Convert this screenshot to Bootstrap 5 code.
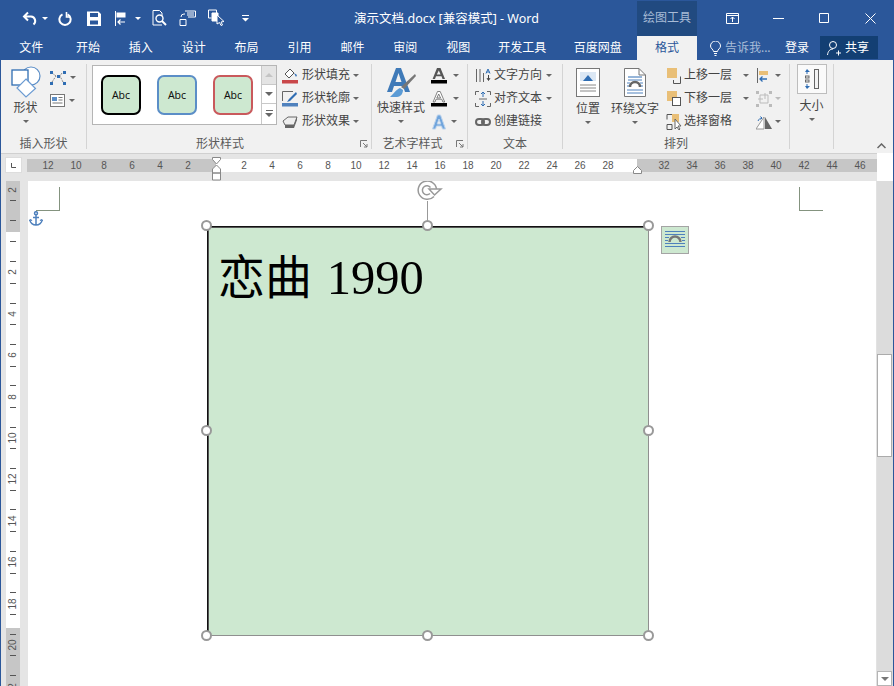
<!DOCTYPE html>
<html lang="zh-CN">
<head>
<meta charset="utf-8">
<title>演示文档.docx [兼容模式] - Word</title>
<link href="https://cdn.jsdelivr.net/npm/bootstrap@5.3.0/dist/css/bootstrap.min.css" rel="stylesheet">
<style>
html,body{margin:0;height:100%;overflow:hidden;background:#fff}
body{font-family:"Noto Sans","Noto Sans CJK SC",sans-serif;font-size:12px;line-height:1.2;color:#444}
svg{display:block;flex:none}
.ml1{margin-left:1px}.ml2{margin-left:2px}.ml3{margin-left:3px}.ml4{margin-left:4px}.ml6{margin-left:6px}.ml7{margin-left:7px}.ml9{margin-left:9px}.ml10{margin-left:10px}.ml11{margin-left:11px}.ml12{margin-left:12px}.ml14{margin-left:14px}.ml15{margin-left:15px}.ml17{margin-left:17px}
.wapp{width:894px;height:686px;border-left:1px solid #2b579a;border-right:1px solid #2b579a;overflow:hidden}
.wtitle{height:36px;background:#2b579a;color:#fff}
.wqat{width:304px;padding-left:21px;height:36px}
.wname{width:283px;font-size:12.5px;color:#fff;margin-right:49px}
.wtool{width:60px;height:35px;margin-top:1px;background:#214a80;color:#a8bbd6}
.wctl{width:46px;height:36px}
.wctl-first{margin-left:12px}
.wtri-w{border-top-color:#fff!important}
.wtabs{height:24px;background:#2b579a;color:#fff;line-height:24px}
.wtab{width:52.9px;text-align:center;white-space:nowrap}
.wtab-file{width:60.5px;text-align:center}
.wtab-w4{width:75.5px;text-align:center}
.wtab-on{width:60px;height:24px;text-align:center;background:#f1f1f1;color:#2b579a;margin-left:1.3px}
.wtell{width:82px;padding-left:13px;color:#a9bdd8;gap:4px}
.wlogin{width:36px;text-align:center}
.wshare{width:58px;height:23px;margin:0 15px 0 auto;background:#133f73;gap:4px;padding-left:7px}
.wribbon{height:93px;background:#f1f1f1;padding-top:4px;position:relative}
.wgrp{height:85px;border-right:1px solid #d4d4d4}
.wbody{height:73px}
.wlabel{height:13px;line-height:13px;text-align:center;color:#5a5a5a;position:relative}
.wl-style{padding-right:18px}
.wl-art{padding-right:14px}
.wlaunch{position:absolute;right:3px;top:3px}
.wg1{width:86px}.wg2{width:285px}.wg3{width:96px}.wg4{width:95px}.wg5{width:227px}.wg6{width:44px}
.wbig{text-align:center;white-space:nowrap}
.wbig svg{margin:0 auto}
.wbig-cap{margin-top:3px}
.wcap-quick{margin-top:2px}
.wcap-doc{margin-top:5px}
.wcap-size{margin-top:5px}
.wtri{width:0;height:0;border-left:3px solid transparent;border-right:3px solid transparent;border-top:3px solid #666;display:inline-block;flex:none}
.wtri-off{border-top-color:#bbb}
.wbig .wtri{display:block;margin:5px auto 0}
.wrow{height:23px;white-space:nowrap}
.wrow svg{width:16px;height:16px}
.wrow-s{height:23px;gap:4px}
.wcol-s{padding-top:2px}
.wgal{width:185px;height:60px;margin:1px 0 0 5px;background:#fff;border:1px solid #b5b5b5}
.wswatches{width:169px;padding-left:8px;gap:16px}
.wsw{width:40px;height:40px;background:#cde8d0;border:2px solid #000;border-radius:7px;color:#111;font-size:10.5px;font-family:"Noto Sans",sans-serif;text-align:center;line-height:36px;margin-top:9px}
.wsw-b{border-color:#5b8ec7}.wsw-r{border-color:#c9595c}
.wgscroll{width:15px;border-left:1px solid #c8c8c8}
.wgscroll>div{height:19px;border-bottom:1px solid #c8c8c8}
.wgscroll>div:last-child{border-bottom:0}
.wgup{background:#e4e4e4}
.wtu-off{border-bottom-color:#c4c4c4!important}
.wtd-d{border-top-color:#666!important}
.wbarline{width:7px;height:1px;background:#666;margin-bottom:2px}
.wsizebtn{width:30px;height:30px;background:#fafafa;border:1px solid #bdbdbd;margin:0 auto}
.wcmd{margin-left:5px}
.wc-shape{width:49px}.wc-quick{width:58px}.wc-pos{width:50px}.wc-wrap{width:48px;margin-left:-2px}
.wc-arr{margin-left:7px;width:90px}
.wi-shape{margin-top:2px!important;margin-left:10px!important}
.wi-big{margin-top:4px!important}
.wtxt-g{padding-left:7px}
.wrulerh{height:28px;background:#e5e5e5;border-top:1px solid #d0d0d0;padding-left:4px;width:876px}
.wcorner{width:17px;height:16px;background:#fff;border:1px solid #ddd;margin-top:3px;margin-right:5px}
.wrulerbar{height:13px;margin-top:5px;color:#555;font-size:10px;line-height:13px;font-family:"Liberation Sans",sans-serif}
.wrg{background:#c6c6c6}
.wrw{background:#fff}
.wnum{width:28px;text-align:center;flex:none}
.wrg1{width:189px;padding-left:7px}
.wrg2{width:421px;padding-left:14px}
.wrg3{width:240px;padding-left:13px}
.wmarg{position:absolute;left:211px;top:3px}
.wmarg2{position:absolute;left:632px;top:12px}
.wmain{height:505px;position:relative;overflow:hidden;width:892px}
.wrulerv{width:27px;background:#e5e5e5;padding-left:5px;flex:none}
.wvbar{width:14px;height:505px;overflow:hidden;background:linear-gradient(#c6c6c6 0 51px,#fff 51px 447px,#c6c6c6 447px)}
.wvcell{height:41.4px;display:grid;grid-template-rows:1fr 2fr 1fr;justify-items:center;font:10px/1 "Liberation Sans",sans-serif;color:#555}
.wvcell:first-child{margin-top:-12px}
.wvt{width:6px;height:1px;background:#555}
.wvt1{align-self:end}
.wvt2{align-self:start}
.wvn{align-self:center;transform:rotate(-90deg)}
.wdoc{flex:1 1 auto;background:#fff;position:relative;overflow:hidden}
.wcrops{padding:6px 53px 0 8px;height:30px}
.wcrop{width:24px;height:24px;border-color:#84937f;border-style:solid;border-width:0}
.wcrop-l{border-right-width:1px;border-bottom-width:1px}
.wcrop-r{border-left-width:1px;border-bottom-width:1px}
.wanchor{position:absolute;left:1px;top:30px}
.wshape{position:relative;width:442px;height:410px;margin:15px 0 0 179px;background:#cde8d0;border:1px solid #8f8f8f;border-left-color:#111;border-top-color:#111;box-shadow:inset 1px 1px 0 #555}
.wtext{font-family:"Liberation Serif","Noto Sans CJK SC",serif;font-size:47px;line-height:1;color:#000;padding:27px 0 0 10px;white-space:nowrap}
.wdig{font-size:48.5px;margin-left:3px}
.whd{position:absolute;width:11px;height:11px;border-radius:50%;background:#fff;border:2px solid #999}
.wh-t{top:-7px}.wh-m{top:198px}.wh-b{top:403px}
.wh-l{left:-7px}.wh-c{left:214px}.wh-r{left:435px}
.wstem{position:absolute;left:219px;top:-26px;width:1px;height:26px;background:#999}
.wrot{position:absolute;left:209px;top:-46px}
.wwrap{position:absolute;left:453px;top:-1px;width:28px;height:28px;background:#cde8d0;border:1px solid #a4a4a4;padding:3px}
.wscroll{width:17px;background:#dcdcdc;flex:none;margin-top:-28px;height:533px;border-left:1px solid #e2e2e2;padding-top:3px;position:relative;z-index:2}
.wsb{width:15px;height:15px;background:#fff;border:1px solid #b5b5b5}
.wthumb{width:15px;height:103px;background:#fff;border:1px solid #ababab;margin-top:183px}
.wsb2{margin-top:214px}
.wtu{width:0;height:0;border-left:4px solid transparent;border-right:4px solid transparent;border-bottom:4px solid #777}
.wtd{width:0;height:0;border-left:4px solid transparent;border-right:4px solid transparent;border-top:4px solid #777}
.wcollapse{position:absolute;right:7px;bottom:4px}
</style>
</head>
<body>
<div class="wapp d-flex flex-column">

  <div class="wtitle d-flex">
    <div class="wqat d-flex align-items-center">
      <svg width="16" height="15" viewBox="0 0 16 15" fill="none" stroke="#fff" stroke-width="2"><path d="M6 1.500 2 5.500l4 4M2 5.500h7a4.500 4.500 0 0 1 2.500 8"/></svg>
      <span class="wtri wtri-w ml4"></span>
      <svg class="ml10" width="14" height="15" viewBox="0 0 14 15" fill="none" stroke="#fff" stroke-width="2"><path d="M9.500 3.300a5.600 5.600 0 1 1-5 0"/><path d="M8.500 1v5h4" stroke-width="1.600"/></svg>
      <svg class="ml15" width="14" height="15" viewBox="0 0 14 15" fill="#fff"><path d="M0 .5h11.500L14 3v12H0zM3 2v4h8V2zM3 9.500v4h8v-4z"/></svg>
      <svg class="ml14" width="11" height="15" viewBox="0 0 11 15" fill="none" stroke="#fff"><path d="M.5 0v15"/><path d="M10 11H3M5.500 8.500 3 11l2.500 2.500" stroke-width="1.200"/><rect x="2" y="2" width="8" height="4" fill="#fff"/></svg>
      <span class="wtri wtri-w ml9"></span>
      <svg class="ml11" width="15" height="16" viewBox="0 0 15 16" fill="none" stroke="#fff"><path d="M10 15H1V.5h6.500L10 3v3"/><circle cx="7.500" cy="8.500" r="3.500" stroke-width="1.400"/><path d="m10 11 4 4" stroke-width="2"/></svg>
      <svg class="ml12" width="17" height="16" viewBox="0 0 17 16" fill="none" stroke="#fff"><path d="M1 9.500h6v6H1zM6 1h10.500v6H9"/><path d="M8 3h7M8 5h7"/><path d="M2 7a3 3 0 0 1 3-3h1"/></svg>
      <svg class="ml12" width="17" height="18" viewBox="0 0 17 18" fill="none" stroke="#fff"><path d="M.5 1h8v3M.5 1v8h3"/><path d="M4 4h6v8H4z" fill="#fff"/><path d="m9 6 7 6.500-3 .5 1.500 3-1.500.5-1.500-3L9 15z" fill="#2b579a"/></svg>
      <svg class="ml17" width="7" height="7" viewBox="0 0 7 7" fill="#fff"><path d="M0 0h7v1H0zM0 3h7L3.500 6.500z"/></svg>
    </div>
    <div class="wname d-flex align-items-center justify-content-center">演示文档.docx [兼容模式] - Word</div>
    <div class="wtool d-flex align-items-center justify-content-center">绘图工具</div>
    <div class="wctl wctl-first d-flex align-items-center justify-content-center">
      <svg width="13" height="11" viewBox="0 0 13 11" fill="none" stroke="#fff"><path d="M.5.500h12v10H.5zM.5 2.500h12"/><path d="M6.500 9V4M4.500 6l2-2 2 2"/></svg>
    </div>
    <div class="wctl d-flex align-items-center justify-content-center"><svg width="11" height="11" viewBox="0 0 11 11" stroke="#fff"><path d="M0 5.500h11"/></svg></div>
    <div class="wctl d-flex align-items-center justify-content-center"><svg width="10" height="10" viewBox="0 0 10 10" fill="none" stroke="#fff"><path d="M.5.500h9v9h-9z"/></svg></div>
    <div class="wctl d-flex align-items-center justify-content-center"><svg width="11" height="11" viewBox="0 0 11 11" fill="none" stroke="#fff"><path d="m.5.500 10 10M10.500.500l-10 10"/></svg></div>
  </div>

  <div class="wtabs d-flex">
    <div class="wtab-file">文件</div>
    <div class="wtab">开始</div><div class="wtab">插入</div><div class="wtab">设计</div><div class="wtab">布局</div>
    <div class="wtab">引用</div><div class="wtab">邮件</div><div class="wtab">审阅</div><div class="wtab">视图</div>
    <div class="wtab-w4">开发工具</div><div class="wtab-w4">百度网盘</div>
    <div class="wtab-on">格式</div>
    <div class="wtell d-flex align-items-center">
      <svg width="11" height="15" viewBox="0 0 11 15" fill="none" stroke="#fff"><path d="M3.500 10.500c0-2-3-3-3-5.500a5 5 0 0 1 10 0c0 2.500-3 3.500-3 5.500zM4 12.500h3M4.500 14.500h2"/></svg>
      <span>告诉我...</span>
    </div>
    <div class="wlogin">登录</div>
    <div class="wshare d-flex align-items-center">
      <svg width="14" height="16" viewBox="0 0 14 16" fill="none" stroke="#fff"><circle cx="6" cy="5" r="3.500"/><path d="M.5 15c.5-4 2.500-6 5.500-6M9 13h5M11.500 10.500v5"/></svg>
      <span>共享</span>
    </div>
  </div>

  <div class="wribbon d-flex">
    <div class="wgrp wg1">
      <div class="wbody d-flex">
        <div class="wbig wc-shape">
          <svg class="wi-shape" width="30" height="32" viewBox="0 0 30 32" fill="none"><circle cx="20" cy="10" r="9" fill="#fff" stroke="#5b8ec7" stroke-width="1.200"/><rect x="1" y="4" width="16" height="15" fill="#fff" stroke="#2f6db3" stroke-width="1.300"/><path d="m15 13 9.500 9.500L15 31l-9-9z" fill="#fff" stroke="#6b9bd2" stroke-width="1.200"/></svg>
          <div class="wbig-cap">形状</div><span class="wtri"></span>
        </div>
        <div class="wcol-s">
          <div class="wrow-s d-flex align-items-center"><svg width="16" height="14" viewBox="0 0 16 14" fill="none"><path d="M2 2 6 5h4M12 2l-2 3M13 11l-3-6M2 11l4-6" stroke="#888" stroke-dasharray="2 1"/><g fill="#2f6db3"><rect width="3" height="3"/><rect x="13" width="3" height="3"/><rect y="11" width="3" height="3"/><rect x="13" y="11" width="3" height="3"/><rect x="7" y="4" width="3" height="3"/></g></svg><span class="wtri"></span></div>
          <div class="wrow-s d-flex align-items-center"><svg width="15" height="13" viewBox="0 0 15 13" fill="none"><rect x=".5" y=".5" width="14" height="12" fill="#fff" stroke="#777"/><path d="M2 3h5v4H2z" fill="#5b8ec7"/><path d="M8.500 3.500h4M8.500 6h4M2.500 9h10" stroke="#777"/></svg><span class="wtri"></span></div>
        </div>
      </div>
      <div class="wlabel">插入形状</div>
    </div>

    <div class="wgrp wg2">
      <div class="wbody d-flex">
        <div class="wgal d-flex">
          <div class="wswatches d-flex">
            <div class="wsw">Abc</div><div class="wsw wsw-b">Abc</div><div class="wsw wsw-r">Abc</div>
          </div>
          <div class="wgscroll">
            <div class="wgup d-flex align-items-center justify-content-center"><span class="wtu wtu-off"></span></div>
            <div class="d-flex align-items-center justify-content-center"><span class="wtd wtd-d"></span></div>
            <div class="d-flex flex-column align-items-center justify-content-center"><span class="wbarline"></span><span class="wtd wtd-d"></span></div>
          </div>
        </div>
        <div class="wcmd">
          <div class="wrow d-flex align-items-center"><svg viewBox="0 0 16 16" fill="none"><path d="M8 1 3 6l4 4 5-5z" fill="#fff" stroke="#555"/><path d="m12 5 3 2-1 2z" fill="#2f6db3"/><rect y="12" width="16" height="3.500" fill="#c9474a"/></svg><span class="ml4">形状填充</span><span class="wtri ml3"></span></div>
          <div class="wrow d-flex align-items-center"><svg viewBox="0 0 16 16" fill="none"><path d="M11 .5H.5V10" stroke="#666"/><path d="M14 1 7 8l-2 3 3-1 7-7z" fill="#2f6db3"/><rect y="12" width="16" height="3.500" fill="#4f81bd"/></svg><span class="ml4">形状轮廓</span><span class="wtri ml3"></span></div>
          <div class="wrow d-flex align-items-center"><svg viewBox="0 0 16 16"><path d="M1 7 6 3h9l-3 8H3z" fill="#eee" stroke="#666"/><path d="M3 11h9l3-8v3l-3 8H3z" fill="#666"/></svg><span class="ml4">形状效果</span><span class="wtri ml3"></span></div>
        </div>
      </div>
      <div class="wlabel wl-style">形状样式
        <svg class="wlaunch" width="8" height="8" viewBox="0 0 8 8" fill="none" stroke="#777"><path d="M.5 7V.5H7M3 3l4 4M7 4v3H4"/></svg>
      </div>
    </div>

    <div class="wgrp wg3">
      <div class="wbody d-flex">
        <div class="wbig wc-quick">
          <svg class="wi-big" width="30" height="31" viewBox="0 0 30 31"><path d="M10 0h5l9 24h-5l-2-6H8l-2 6H1zm2.500 5-3 9h6z" fill="#3f7ab8"/><path d="m29 6 1 2-12 13-3-2z" fill="#777"/><path d="M14 20c-3 1-5 4-10 9h7c4 0 6-4 6-7z" fill="#5b9bd5"/></svg>
          <div class="wcap-quick">快速样式</div><span class="wtri"></span>
        </div>
        <div class="ml1">
          <div class="wrow d-flex align-items-center"><svg viewBox="0 0 16 16"><path d="M6 0h3.500L14 11h-2.500l-1-2.800H5L4 11H1.600zm1.800 2.500-2 4h3.800z" fill="#555"/><rect y="12" width="16" height="3.500" fill="#000"/></svg><span class="wtri ml6"></span></div>
          <div class="wrow d-flex align-items-center"><svg viewBox="0 0 16 16"><path d="M6.500.5h2.700L13.700 11h-1.800l-1.100-2.800H5l-1 2.800H2.100zm1.200 2.500L5.800 7h3.800z" fill="#fff" stroke="#666" stroke-width=".8"/><rect y="12" width="16" height="3.500" fill="#000"/></svg><span class="wtri ml6"></span></div>
          <div class="wrow d-flex align-items-center"><svg viewBox="0 0 16 16"><path d="M6.500 1h3l5 14h-3l-1-3h-5l-1 3h-3zm1.500 4L6.200 10h3.600z" fill="#6fa4dc" stroke="#bcd3ec"/></svg><span class="wtri ml4"></span></div>
        </div>
      </div>
      <div class="wlabel wl-art">艺术字样式
        <svg class="wlaunch" width="8" height="8" viewBox="0 0 8 8" fill="none" stroke="#777"><path d="M.5 7V.5H7M3 3l4 4M7 4v3H4"/></svg>
      </div>
    </div>

    <div class="wgrp wg4">
      <div class="wbody wtxt-g">
        <div class="wrow d-flex align-items-center"><svg viewBox="0 0 16 16" fill="none" stroke="#666"><path d="M1.500 1v13M5 1v13M8.500 5v9"/><path d="M11 5.500 13 1l2 4.500M11.500 4h3" stroke="#2f6db3"/><path d="m12 10 1.500 2.500 1.500-2.500M13.500 7v5" stroke="#444"/></svg><span class="ml3">文字方向</span><span class="wtri ml4"></span></div>
        <div class="wrow d-flex align-items-center"><svg viewBox="0 0 16 16" fill="none" stroke="#666"><path d="M.5 4V.5H4M12 .5h3.500V4M.5 12v3.500H4M12 15.500h3.500V12"/><path d="M8 1v5M6 3l2-2 2 2M8 15v-5M6 13l2 2 2-2" stroke="#2f6db3"/><path d="M4 8h8"/></svg><span class="ml3">对齐文本</span><span class="wtri ml4"></span></div>
        <div class="wrow d-flex align-items-center"><svg viewBox="0 0 16 16" fill="none" stroke="#666" stroke-width="2"><rect x="1" y="5" width="8" height="6" rx="3"/><rect x="7" y="5" width="8" height="6" rx="3"/></svg><span class="ml3">创建链接</span></div>
      </div>
      <div class="wlabel">文本</div>
    </div>

    <div class="wgrp wg5">
      <div class="wbody d-flex">
        <div class="wbig wc-pos">
          <svg class="wi-big" width="24" height="29" viewBox="0 0 24 29" fill="none"><rect x=".5" y=".5" width="23" height="28" fill="#fff" stroke="#777"/><path d="M4 4h16v9H4z" fill="#dbe7f4"/><path d="m7 13 5-6 5 6z" fill="#2f6db3"/><path d="M4 17h16M4 20h16M4 23h16" stroke="#888"/></svg>
          <div class="wcap-doc">位置</div><span class="wtri"></span>
        </div>
        <div class="wbig wc-wrap">
          <svg class="wi-big" width="22" height="29" viewBox="0 0 22 29" fill="none"><path d="M.5.500H15L21.500 7v21.500H.5z" fill="#fff" stroke="#777"/><path d="M15 .5V7h6.500" stroke="#777"/><path d="M4 9h14" stroke="#2f6db3"/><path d="M6 19a5 5 0 0 1 10 0" stroke="#666" stroke-width="2.500"/><path d="M4 12h14M3 22h16M3 25h16M3 15h3M16 15h3M3 18h2M17 18h2" stroke="#4f81bd"/></svg>
          <div class="wcap-doc">环绕文字</div><span class="wtri"></span>
        </div>
        <div class="wc-arr">
          <div class="wrow d-flex align-items-center"><svg viewBox="0 0 16 16" fill="none"><rect x="1" width="10" height="10" fill="#e9bf77"/><path d="M7.500 15.500h7v-7" stroke="#555"/><path d="M7.500 12v3.500" stroke="#555"/></svg><span class="ml2">上移一层</span><span class="wtri ml11"></span></div>
          <div class="wrow d-flex align-items-center"><svg viewBox="0 0 16 16" fill="none"><rect x="6.500" y="6.500" width="8" height="8" fill="#fff" stroke="#555"/><path d="M1 0h10v6H6v4H1z" fill="#e9bf77"/></svg><span class="ml2">下移一层</span><span class="wtri ml11"></span></div>
          <div class="wrow d-flex align-items-center"><svg viewBox="0 0 16 16" fill="none"><path d="M1 .5h5M1 .5v5M1 10.500h5v5H1z" stroke="#555"/><rect x="6" width="7" height="8" fill="#e9bf77"/><path d="M9 5v10l2-2 2 3 1-1-2-3h3z" fill="#fff" stroke="#666"/></svg><span class="ml2">选择窗格</span></div>
        </div>
        <div>
          <div class="wrow d-flex align-items-center"><svg viewBox="0 0 16 16" fill="none"><path d="M1.500 0v15" stroke="#666"/><rect x="3" y="3" width="9" height="4" fill="#e9bf77"/><path d="M11 11H4M6.500 8.500 4 11l2.500 2.500" stroke="#2f6db3" stroke-width="1.300"/></svg><span class="wtri ml3"></span></div>
          <div class="wrow d-flex align-items-center"><svg viewBox="0 0 16 16" fill="none"><path d="M4 4h8v8H4zM2 8h5M9 2v6" stroke="#bbb"/><g fill="#bbb"><rect width="3" height="3"/><rect x="13" width="3" height="3"/><rect y="13" width="3" height="3"/><rect x="13" y="13" width="3" height="3"/></g></svg><span class="wtri wtri-off ml3"></span></div>
          <div class="wrow d-flex align-items-center"><svg viewBox="0 0 16 16" fill="none"><path d="M8 3v12H0z" fill="#fff" stroke="#999"/><path d="m9 3 7 12H9z" fill="#666"/><path d="M2 7c1-2 2-3 4-3M4.500 2.500 6 4 4.500 5.500" stroke="#2f6db3"/></svg><span class="wtri ml3"></span></div>
        </div>
      </div>
      <div class="wlabel">排列</div>
    </div>

    <div class="wgrp wg6">
      <div class="wbody">
        <div class="wbig">
          <div class="wsizebtn d-flex align-items-center justify-content-center">
            <svg width="14" height="20" viewBox="0 0 14 20" fill="none"><rect x="9.500" y=".5" width="4" height="19" stroke="#666" fill="#f4f4f4"/><rect x=".5" y="7" width="3.500" height="2" stroke="#666"/><rect x=".5" y="11" width="3.500" height="2" stroke="#666"/><path d="M2 0 0 3h1.500v2h1V3H5zM2 20 0 17h1.500v-2h1v2H5z" fill="#2f6db3"/></svg>
          </div>
          <div class="wcap-size">大小</div><span class="wtri"></span>
        </div>
      </div>
      <div class="wlabel"></div>
    </div>

    <svg class="wcollapse" width="9" height="6" viewBox="0 0 9 6" fill="none" stroke="#666" stroke-width="1.500"><path d="m.5 5 4-4 4 4"/></svg>
  </div>

  <div class="wrulerh d-flex position-relative">
    <div class="wcorner d-flex align-items-center justify-content-center">
      <svg width="5" height="5" viewBox="0 0 5 5" fill="none" stroke="#555"><path d="M.5 0v4.500H5"/></svg>
    </div>
    <div class="wrulerbar wrg wrg1 d-flex">
      <span class="wnum">12</span><span class="wnum">10</span><span class="wnum">8</span><span class="wnum">6</span><span class="wnum">4</span><span class="wnum">2</span>
    </div>
    <div class="wrulerbar wrw wrg2 d-flex">
      <span class="wnum">2</span><span class="wnum">4</span><span class="wnum">6</span><span class="wnum">8</span><span class="wnum">10</span><span class="wnum">12</span><span class="wnum">14</span><span class="wnum">16</span><span class="wnum">18</span><span class="wnum">20</span><span class="wnum">22</span><span class="wnum">24</span><span class="wnum">26</span><span class="wnum">28</span>
    </div>
    <div class="wrulerbar wrg wrg3 d-flex">
      <span class="wnum">32</span><span class="wnum">34</span><span class="wnum">36</span><span class="wnum">38</span><span class="wnum">40</span><span class="wnum">42</span><span class="wnum">44</span><span class="wnum">46</span>
    </div>
    <svg class="wmarg" width="9" height="24" viewBox="0 0 9 24" fill="#fff" stroke="#888"><path d="M.5.500h8v2L4.500 7l-4-4.500zM4.500 8l4 4v4h-8v-4zM.5 16h8v7h-8z"/></svg>
    <svg class="wmarg2" width="9" height="8" viewBox="0 0 9 8" fill="#fff" stroke="#888"><path d="m4.500.5 4 4v3h-8v-3z"/></svg>
  </div>

  <div class="wmain d-flex">
    <div class="wrulerv">
      <div class="wvbar">
        <div class="wvcell"><span class="wvt wvt1"></span><span class="wvn">2</span><span class="wvt wvt2"></span></div>
        <div class="wvcell"><span class="wvt wvt1"></span><span class="wvn"></span><span class="wvt wvt2"></span></div>
        <div class="wvcell"><span class="wvt wvt1"></span><span class="wvn">2</span><span class="wvt wvt2"></span></div>
        <div class="wvcell"><span class="wvt wvt1"></span><span class="wvn">4</span><span class="wvt wvt2"></span></div>
        <div class="wvcell"><span class="wvt wvt1"></span><span class="wvn">6</span><span class="wvt wvt2"></span></div>
        <div class="wvcell"><span class="wvt wvt1"></span><span class="wvn">8</span><span class="wvt wvt2"></span></div>
        <div class="wvcell"><span class="wvt wvt1"></span><span class="wvn">10</span><span class="wvt wvt2"></span></div>
        <div class="wvcell"><span class="wvt wvt1"></span><span class="wvn">12</span><span class="wvt wvt2"></span></div>
        <div class="wvcell"><span class="wvt wvt1"></span><span class="wvn">14</span><span class="wvt wvt2"></span></div>
        <div class="wvcell"><span class="wvt wvt1"></span><span class="wvn">16</span><span class="wvt wvt2"></span></div>
        <div class="wvcell"><span class="wvt wvt1"></span><span class="wvn">18</span><span class="wvt wvt2"></span></div>
        <div class="wvcell"><span class="wvt wvt1"></span><span class="wvn">20</span><span class="wvt wvt2"></span></div>
        <div class="wvcell"><span class="wvt wvt1"></span><span class="wvn">2</span><span class="wvt wvt2"></span></div>
      </div>
    </div>
    <div class="wdoc">
      <div class="wcrops d-flex justify-content-between">
        <div class="wcrop wcrop-l"></div>
        <div class="wcrop wcrop-r"></div>
      </div>
      <svg class="wanchor" width="14" height="15" viewBox="0 0 14 15" fill="none" stroke="#4f81bd" stroke-width="1.500"><circle cx="7" cy="2.200" r="1.500"/><path d="M7 4v10M4 6.500h6M1 9c0 3 3 5 6 5s6-2 6-5"/><path d="m0 10 1.500-2L3 10M11 10l1.500-2L14 10" stroke-width="1"/></svg>
      <div class="wshape">
        <div class="wtext">恋曲 <span class="wdig">1990</span></div>
        <span class="wstem"></span>
        <svg class="wrot" width="27" height="21" viewBox="0 0 27 21" fill="none" stroke="#999" stroke-width="1.500"><path d="M17 15.500A9.200 9.200 0 1 1 19.500 8"/><path d="M13 12.500a4.500 4.500 0 1 1 .5-6"/><path d="m12 8 5.500 6L24 8z" fill="#fff"/></svg>
        <span class="whd wh-t wh-l"></span>
        <span class="whd wh-t wh-c"></span>
        <span class="whd wh-t wh-r"></span>
        <span class="whd wh-m wh-l"></span>
        <span class="whd wh-m wh-r"></span>
        <span class="whd wh-b wh-l"></span>
        <span class="whd wh-b wh-c"></span>
        <span class="whd wh-b wh-r"></span>
        <div class="wwrap">
          <svg width="20" height="20" viewBox="0 0 20 20" fill="none" stroke="#4f81bd"><path d="M0 1.500h20M0 4.500h20M0 7.500h4M16 7.500h4M0 10.500h3M17 10.500h3M0 13.500h20M0 16.500h20"/><path d="M4.500 12a5.500 5.500 0 0 1 11 0" stroke="#777" stroke-width="2.500"/></svg>
        </div>
      </div>
    </div>
    <div class="wscroll d-flex flex-column">
      <div class="wsb d-flex align-items-center justify-content-center"><span class="wtu"></span></div>
      <div class="wthumb"></div>
      <div class="wsb wsb2 d-flex align-items-center justify-content-center"><span class="wtd"></span></div>
    </div>
  </div>
</div>
</body>
</html>
